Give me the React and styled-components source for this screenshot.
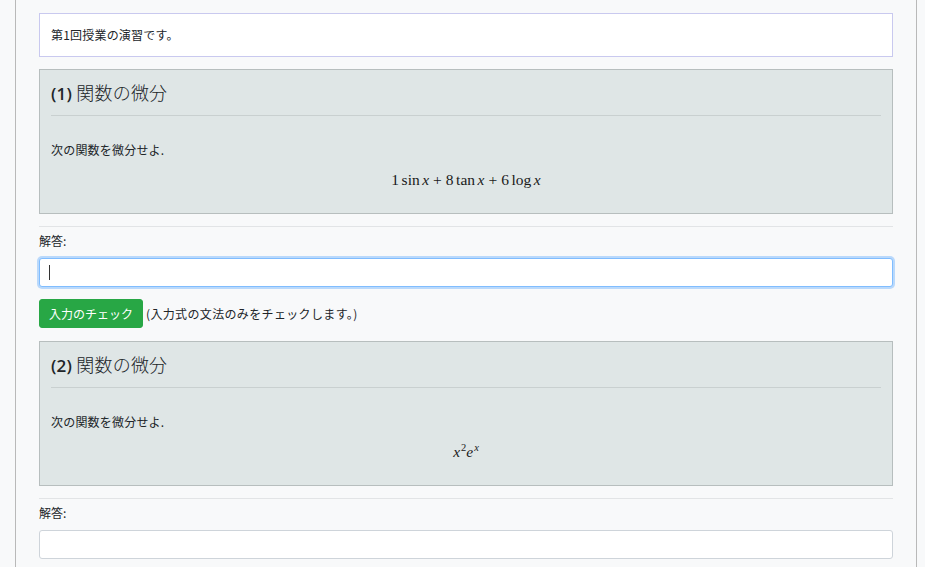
import styled, { createGlobalStyle } from "styled-components";

const GlobalStyle = createGlobalStyle`
    html, body {
        margin: 0;
        padding: 0;
        background: #f8f9fa;
    }
    body {
        font-family: "Noto Sans CJK JP", "Noto Sans", sans-serif;
        font-size: 12px;
        line-height: 18px;
        color: #212529;
    }
`;

const Page = styled.div`
    box-sizing: border-box;
    width: 902px;
    min-height: 567px;
    margin-left: 15px;
    padding: 13px 23px 0 23px;
    border-left: 1px solid #b9b9b9;
    border-right: 1px solid #b9b9b9;
    background: #f8f9fa;
`;

const Intro = styled.div`
    background: #fff;
    border: 1px solid #c9c9ef;
    padding: 12px 11px;
    margin-bottom: 12px;
    font-size: 12px;
    line-height: 18px;
    letter-spacing: 0.2px;
`;

const Card = styled.div`
    background: #dfe6e6;
    border: 1px solid #b7bebe;
    padding: 12px 11px;
`;

const Title = styled.h4`
    margin: 0;
    font-size: 18px;
    line-height: 20px;
    font-weight: 300;
    font-family: "Noto Sans CJK JP", sans-serif;
    letter-spacing: 0.2px;
`;

const Num = styled.span`
    font-family: "Open Sans", "Noto Sans", sans-serif;
    font-weight: 600;
    font-size: 17px;
`;

const CardRule = styled.hr`
    border: 0;
    border-top: 1px solid #c9d0d0;
    margin: 11px 0 25px 0;
`;

const Text = styled.p`
    margin: 0;
    letter-spacing: 0.2px;
`;

const MathBlock = styled.div`
    text-align: center;
    margin: 12px 0 12px 0;
    font-family: "Liberation Serif", "DejaVu Serif", serif;
    font-size: 15.5px;
    line-height: 18px;
    color: #1a1a1a;
`;

const Var = styled.i`
    font-style: italic;
`;

const Op = styled.span`
    padding: 0 ${(p) => p.$gap || 0}px;
`;

const Sup = styled.sup`
    font-size: 10.5px;
    vertical-align: 6px;
    line-height: 0;
    padding-left: 1px;
`;

const Rule = styled.hr`
    border: 0;
    border-top: 1px solid #e2e4e6;
    margin: 12px 0 5px 0;
`;

const Label = styled.div`
    margin-bottom: 8px;
    line-height: 18px;
`;

const InputWrap = styled.div`
    position: relative;
`;

const Input = styled.input`
    box-sizing: border-box;
    display: block;
    width: 100%;
    height: 29px;
    padding: 4px 9px;
    border-radius: 3px;
    font-size: 12px;
    background: #fff;
    outline: none;
    border: 1px solid ${(p) => (p.$focused ? "#80bdff" : "#ced4da")};
    box-shadow: ${(p) =>
        p.$focused ? "0 0 0 2px rgba(0, 123, 255, 0.25)" : "none"};
`;

const Caret = styled.span`
    position: absolute;
    left: 10px;
    top: 7px;
    width: 1px;
    height: 15px;
    background: #333;
`;

const CheckRow = styled.div`
    display: flex;
    align-items: center;
    gap: 3px;
    margin-top: 12px;
    margin-bottom: 13px;
`;

const Button = styled.button`
    font-family: "Noto Sans CJK JP", sans-serif;
    font-size: 12px;
    line-height: 18px;
    color: #fff;
    background: #28a745;
    border: 1px solid #28a745;
    border-radius: 3px;
    padding: 4px 9px;
    height: 29px;
`;

const Note = styled.span`
    letter-spacing: 0.35px;
`;

const problems = [
    {
        no: "(1)",
        math: (
            <>
                1<Op $gap={2.5}>sin</Op>
                <Var>x</Var>
                <Op $gap={4}>+</Op>8<Op $gap={2.5}>tan</Op>
                <Var>x</Var>
                <Op $gap={4}>+</Op>6<Op $gap={2.5}>log</Op>
                <Var>x</Var>
            </>
        ),
        focused: true,
    },
    {
        no: "(2)",
        math: (
            <>
                <Var>x</Var>
                <Sup>2</Sup>
                <Var>e</Var>
                <Sup>
                    <Var>x</Var>
                </Sup>
            </>
        ),
        focused: false,
    },
];

const Problem = ({ no, math, focused }) => (
    <>
        <Card>
            <Title>
                <Num>{no}</Num> 関数の微分
            </Title>
            <CardRule />
            <Text>次の関数を微分せよ.</Text>
            <MathBlock>{math}</MathBlock>
        </Card>
        <Rule />
        <Label>解答:</Label>
        <InputWrap>
            <Input $focused={focused} />
            {focused && <Caret />}
        </InputWrap>
        {focused && (
            <CheckRow>
                <Button>入力のチェック</Button>
                <Note>(入力式の文法のみをチェックします。)</Note>
            </CheckRow>
        )}
    </>
);

export default function App() {
    return (
        <>
            <GlobalStyle />
            <Page>
                <Intro>第1回授業の演習です。</Intro>
                {problems.map((p) => (
                    <Problem key={p.no} {...p} />
                ))}
            </Page>
        </>
    );
}
